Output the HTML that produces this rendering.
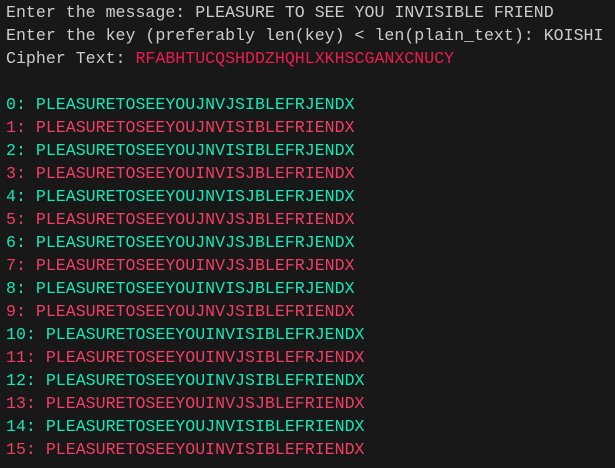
<!DOCTYPE html>
<html><head><style>
html,body{margin:0;padding:0;background:#181818;width:615px;height:468px;overflow:hidden}
pre{margin:0;padding:1px 0 0 6px;font-family:"Liberation Mono","DejaVu Sans Mono",monospace;font-size:16.6px;line-height:23px;color:#cccccc;white-space:pre}
.c{color:#14e8b8}.r{color:#f23d64}.k{color:#ee1b4f}
</style></head><body><pre>Enter the message: PLEASURE TO SEE YOU INVISIBLE FRIEND
Enter the key (preferably len(key) &lt; len(plain_text): KOISHI
Cipher Text: <span class="k">RFABHTUCQSHDDZHQHLXKHSCGANXCNUCY</span>

<span class="c">0: PLEASURETOSEEYOUJNVJSIBLEFRJENDX</span>
<span class="r">1: PLEASURETOSEEYOUJNVISIBLEFRIENDX</span>
<span class="c">2: PLEASURETOSEEYOUJNVISIBLEFRJENDX</span>
<span class="r">3: PLEASURETOSEEYOUINVISJBLEFRIENDX</span>
<span class="c">4: PLEASURETOSEEYOUJNVISJBLEFRJENDX</span>
<span class="r">5: PLEASURETOSEEYOUJNVJSJBLEFRIENDX</span>
<span class="c">6: PLEASURETOSEEYOUJNVJSJBLEFRJENDX</span>
<span class="r">7: PLEASURETOSEEYOUINVJSJBLEFRJENDX</span>
<span class="c">8: PLEASURETOSEEYOUINVISJBLEFRJENDX</span>
<span class="r">9: PLEASURETOSEEYOUJNVJSIBLEFRIENDX</span>
<span class="c">10: PLEASURETOSEEYOUINVISIBLEFRJENDX</span>
<span class="r">11: PLEASURETOSEEYOUINVJSIBLEFRJENDX</span>
<span class="c">12: PLEASURETOSEEYOUINVJSIBLEFRIENDX</span>
<span class="r">13: PLEASURETOSEEYOUINVJSJBLEFRIENDX</span>
<span class="c">14: PLEASURETOSEEYOUJNVISIBLEFRIENDX</span>
<span class="r">15: PLEASURETOSEEYOUINVISIBLEFRIENDX</span>
</pre></body></html>
